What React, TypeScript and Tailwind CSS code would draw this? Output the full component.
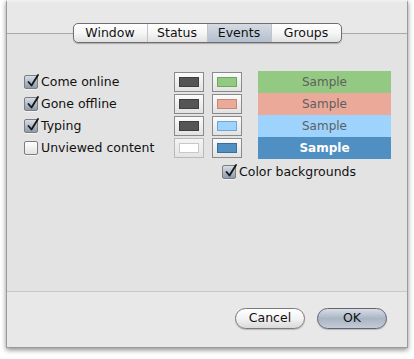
import { useState } from 'react';

type Row = { label: string; on: boolean; text: string; bg: string; sample: string; sampleText: string };

const rows: Row[] = [
  { label: 'Come online', on: true, text: 'bg-[#555555] border-[#3e3e3e]', bg: 'bg-[#93c982] border-[#6fa661]', sample: 'bg-[#93c982]', sampleText: 'text-[#5f5f5f]' },
  { label: 'Gone offline', on: true, text: 'bg-[#555555] border-[#3e3e3e]', bg: 'bg-[#eba999] border-[#c4877a]', sample: 'bg-[#eba999]', sampleText: 'text-[#5f5f5f]' },
  { label: 'Typing', on: true, text: 'bg-[#555555] border-[#3e3e3e]', bg: 'bg-[#9dd3fd] border-[#6fa6d4]', sample: 'bg-[#9dd3fd]', sampleText: 'text-[#5f5f5f]' },
  { label: 'Unviewed content', on: false, text: 'bg-white border-[#c9c9c9]', bg: 'bg-[#4f8fc1] border-[#3a6f9c]', sample: 'bg-[#4f8fc1]', sampleText: 'text-white font-bold text-[11.5px]' },
];

const tabs = ['Window', 'Status', 'Events', 'Groups'];

function CheckBox({ on, onClick }: { on: boolean; onClick: () => void }) {
  return (
    <button
      onClick={onClick}
      className={`relative w-[14px] h-[14px] shrink-0 rounded-[2px] border border-[#7d7d7d] shadow-[0_1px_0_rgba(255,255,255,0.6)] ${
        on ? 'bg-gradient-to-b from-[#d6dde7] to-[#8d9cb0]' : 'bg-gradient-to-b from-white to-[#e2e2e2]'
      }`}
    >
      {on && (
        <svg className="absolute left-[1px] top-[-3px]" width="14" height="15" viewBox="0 0 14 15">
          <path d="M2.5 9 L5.5 12.5 L12 2" fill="none" stroke="#1a1a1a" strokeWidth="1.9" strokeLinecap="round" strokeLinejoin="round" />
        </svg>
      )}
    </button>
  );
}

function Well({ cls, dim }: { cls: string; dim?: boolean }) {
  return (
    <div
      className={`w-[30px] h-[20px] flex items-center justify-center border ${
        dim ? 'border-[#b9b9b9] bg-gradient-to-b from-[#f4f4f4] to-[#e4e4e4]' : 'border-[#8a8a8a] bg-gradient-to-b from-[#fbfbfb] to-[#e2e2e2]'
      }`}
    >
      <div className={`w-[20px] h-[10px] border ${cls}`} />
    </div>
  );
}

export default function App() {
  const [checks, setChecks] = useState(rows.map(r => r.on));
  const [colorBg, setColorBg] = useState(true);
  const [tab, setTab] = useState('Events');

  return (
    <div className="w-[414px] h-[359px] bg-white pl-[6px] overflow-hidden" style={{ fontFamily: '"DejaVu Sans", sans-serif' }}>
      <div className="w-[402px] h-[348px] bg-[#e8e8e8] border-x border-b border-[#9b9b9b] shadow-[0_2px_5px_rgba(0,0,0,0.45)] flex flex-col border-t-2 border-t-[#f0f0f0]">
        <div className="h-[21px]" />
        {/* TABS */}
        <div className="relative z-10 flex justify-center">
          <div className="flex h-[20px] rounded-[5px] border border-[#6f6f6f] overflow-hidden shadow-[0_1px_1px_rgba(0,0,0,0.25)] bg-gradient-to-b from-white via-[#f6f6f6] to-[#e1e1e1]">
            {tabs.map((t, i) => (
              <button
                key={t}
                onClick={() => setTab(t)}
                className={`h-full text-[12.5px] leading-none text-[#111] flex items-center justify-center ${
                  i > 0 ? 'border-l border-[#c4c4c4]' : ''
                } ${
                  t === 'Window' ? 'w-[73px]' : t === 'Status' ? 'w-[60px]' : t === 'Events' ? 'w-[64px]' : 'w-[70px]'
                } ${tab === t ? 'bg-gradient-to-b from-[#d5dbe3] to-[#b3bfcd]' : ''}`}
              >
                {t}
              </button>
            ))}
          </div>
        </div>

        {/* CONTENT */}
        <div className="-mt-[10px] h-[259px] border-t border-b border-[#a9a9a9] border-b-[#c8c8c8] bg-[#e3e3e3] pt-[37px] pl-[17px]">
          <div className="flex">
            <div className="w-[150px] flex flex-col">
              {rows.map((r, i) => (
                <div key={r.label} className="h-[22px] flex items-center gap-[3px]">
                  <CheckBox on={checks[i]} onClick={() => setChecks(c => c.map((v, j) => (j === i ? !v : v)))} />
                  <span className="text-[12.5px] text-[#111] leading-none">{r.label}</span>
                </div>
              ))}
            </div>
            <div className="flex flex-col">
              {rows.map((r, i) => (
                <div key={r.label} className="h-[22px] flex items-center gap-[8px]">
                  <Well cls={r.text} dim={i === 3} />
                  <Well cls={r.bg} />
                </div>
              ))}
            </div>
            <div className="ml-[16px] w-[133px] flex flex-col">
              {rows.map(r => (
                <div key={r.label} className={`h-[22px] flex items-center justify-center text-[12px] ${r.sample} ${r.sampleText}`}>
                  Sample
                </div>
              ))}
            </div>
          </div>
          <div className="mt-[6px] ml-[198px] flex items-center gap-[3px]">
            <CheckBox on={colorBg} onClick={() => setColorBg(v => !v)} />
            <span className="text-[12.5px] text-[#111] leading-none">Color backgrounds</span>
          </div>
        </div>

        {/* FOOTER */}
        <div className="flex-1 flex justify-end items-start pt-[16px] pr-[20px] gap-[12px]">
          <button className="w-[70px] h-[21px] rounded-full border border-[#7a7a7a] bg-gradient-to-b from-white via-[#f3f3f3] to-[#d9d9d9] shadow-[0_1px_1px_rgba(0,0,0,0.2)] text-[12.5px] text-[#111] leading-none">
            Cancel
          </button>
          <button className="w-[70px] h-[21px] rounded-full border border-[#5e6672] bg-gradient-to-b from-[#d8dee6] via-[#aab5c4] to-[#c2cbd6] shadow-[0_1px_1px_rgba(0,0,0,0.2)] text-[12.5px] text-[#111] leading-none">
            OK
          </button>
        </div>
      </div>
    </div>
  );
}
